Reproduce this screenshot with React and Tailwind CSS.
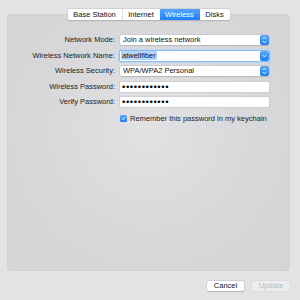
const font = { fontFamily: '"Liberation Sans", Arial, sans-serif' }

const tabs = ['Base Station', 'Internet', 'Wireless', 'Disks']

function Stepper({ single }) {
  return (
    <span className="flex h-full w-[9px] items-center justify-center rounded-[2px] bg-gradient-to-b from-[#5aa9f8] to-[#1b7ff5]">
      {single ? (
        <svg width="5" height="4" viewBox="0 0 5 4" fill="none">
          <path d="M0.8 1 L2.5 2.8 L4.2 1" stroke="white" strokeWidth="0.9" />
        </svg>
      ) : (
        <svg width="5" height="8" viewBox="0 0 5 8" fill="none">
          <path d="M0.8 3 L2.5 1.2 L4.2 3" stroke="white" strokeWidth="0.9" />
          <path d="M0.8 5 L2.5 6.8 L4.2 5" stroke="white" strokeWidth="0.9" />
        </svg>
      )}
    </span>
  )
}

function Label({ children }) {
  return <span className="text-right text-[7.5px] leading-[10px] text-[#222]">{children}</span>
}

function PopUp({ value }) {
  return (
    <div className="flex h-[10px] items-center rounded-[2px] bg-white pl-[3px] shadow-[0_0_0_0.5px_#c4c4c6,0_0.5px_1px_rgba(0,0,0,0.2)]">
      <span className="flex-1 text-[7.5px] leading-[10px] text-[#111]">{value}</span>
      <Stepper />
    </div>
  )
}

function Password() {
  return (
    <div className="flex h-[10px] items-center bg-white pl-[2px] shadow-[0_0_0_0.5px_#c4c4c6]">
      <span className="text-[9.5px] leading-[10px] tracking-[0.6px] text-black">••••••••••••</span>
    </div>
  )
}

export default function App() {
  return (
    <div style={font} className="flex h-[300px] w-[300px] flex-col bg-[#e3e3e5] pt-[9px]">
      <div className="relative z-10 flex justify-center pr-[3px]">
        <div className="flex h-[11px] overflow-hidden rounded-[2px] bg-white shadow-[0_0_0_0.5px_#c8c8ca,0_0.5px_1px_rgba(0,0,0,0.25)]">
          {tabs.map((tab) => (
            <span
              key={tab}
              className={
                tab === 'Wireless'
                  ? 'flex w-[40px] items-center justify-center bg-gradient-to-b from-[#52a5f9] to-[#1a7ff8] text-[7.5px] text-white'
                  : tab === 'Base Station'
                    ? 'flex w-[55px] items-center justify-center border-r border-[#dcdcdc] text-[7.5px] text-[#111]'
                    : tab === 'Internet'
                      ? 'flex w-[37px] items-center justify-center text-[7.5px] text-[#111]'
                      : 'flex w-[30px] items-center justify-center text-[7.5px] text-[#111]'
              }
            >
              {tab}
            </span>
          ))}
        </div>
      </div>

      <div className="mx-[7px] -mt-[6px] h-[257px] w-[283px] rounded-[3px] border border-[#d2d2d4] bg-[radial-gradient(ellipse_at_50%_45%,#e2e2e4_0%,#d7d7d9_60%,#d5d5d7_100%)] pt-[20px]">
        <div className="grid grid-cols-[107px_149px] items-center gap-x-[5px] gap-y-[5.5px]">
          <Label>Network Mode:</Label>
          <PopUp value="Join a wireless network" />

          <Label>Wireless Network Name:</Label>
          <div className="flex h-[10px] items-center rounded-[1px] bg-white pl-[1px] shadow-[0_0_0_1px_#8fbdf0,0_0_0_2px_#b9d6f6]">
            <span className="flex h-full flex-1 items-center">
              <span className="bg-[#b5d5fd] px-[1px] text-[7.5px] leading-[9px] text-[#111]">atwellfiber</span>
            </span>
            <Stepper single />
          </div>

          <Label>Wireless Security:</Label>
          <PopUp value="WPA/WPA2 Personal" />

          <Label>Wireless Password:</Label>
          <Password />

          <Label>Verify Password:</Label>
          <Password />

          <span />
          <div className="flex items-center gap-[3px] pt-[1px]">
            <span className="flex h-[7px] w-[7px] items-center justify-center rounded-[1.5px] bg-gradient-to-b from-[#52a5f9] to-[#1a7ff8]">
              <svg width="5" height="5" viewBox="0 0 5 5" fill="none">
                <path d="M0.9 2.6 L2 3.8 L4.1 0.9" stroke="white" strokeWidth="0.9" />
              </svg>
            </span>
            <span className="text-[7.5px] leading-[10px] text-[#222]">Remember this password in my keychain</span>
          </div>
        </div>
      </div>

      <div className="mt-[10px] flex justify-end gap-[8px] pr-[10px]">
        <button className="flex h-[10px] w-[37px] items-center justify-center rounded-[2px] bg-white text-[7.5px] text-[#111] shadow-[0_0_0_0.5px_#c4c4c6,0_0.5px_1px_rgba(0,0,0,0.25)]">
          Cancel
        </button>
        <button className="flex h-[10px] w-[38px] items-center justify-center rounded-[2px] bg-[#ededef] text-[7.5px] text-[#b8b8ba] shadow-[0_0_0_0.5px_#d4d4d6]">
          Update
        </button>
      </div>
    </div>
  )
}
